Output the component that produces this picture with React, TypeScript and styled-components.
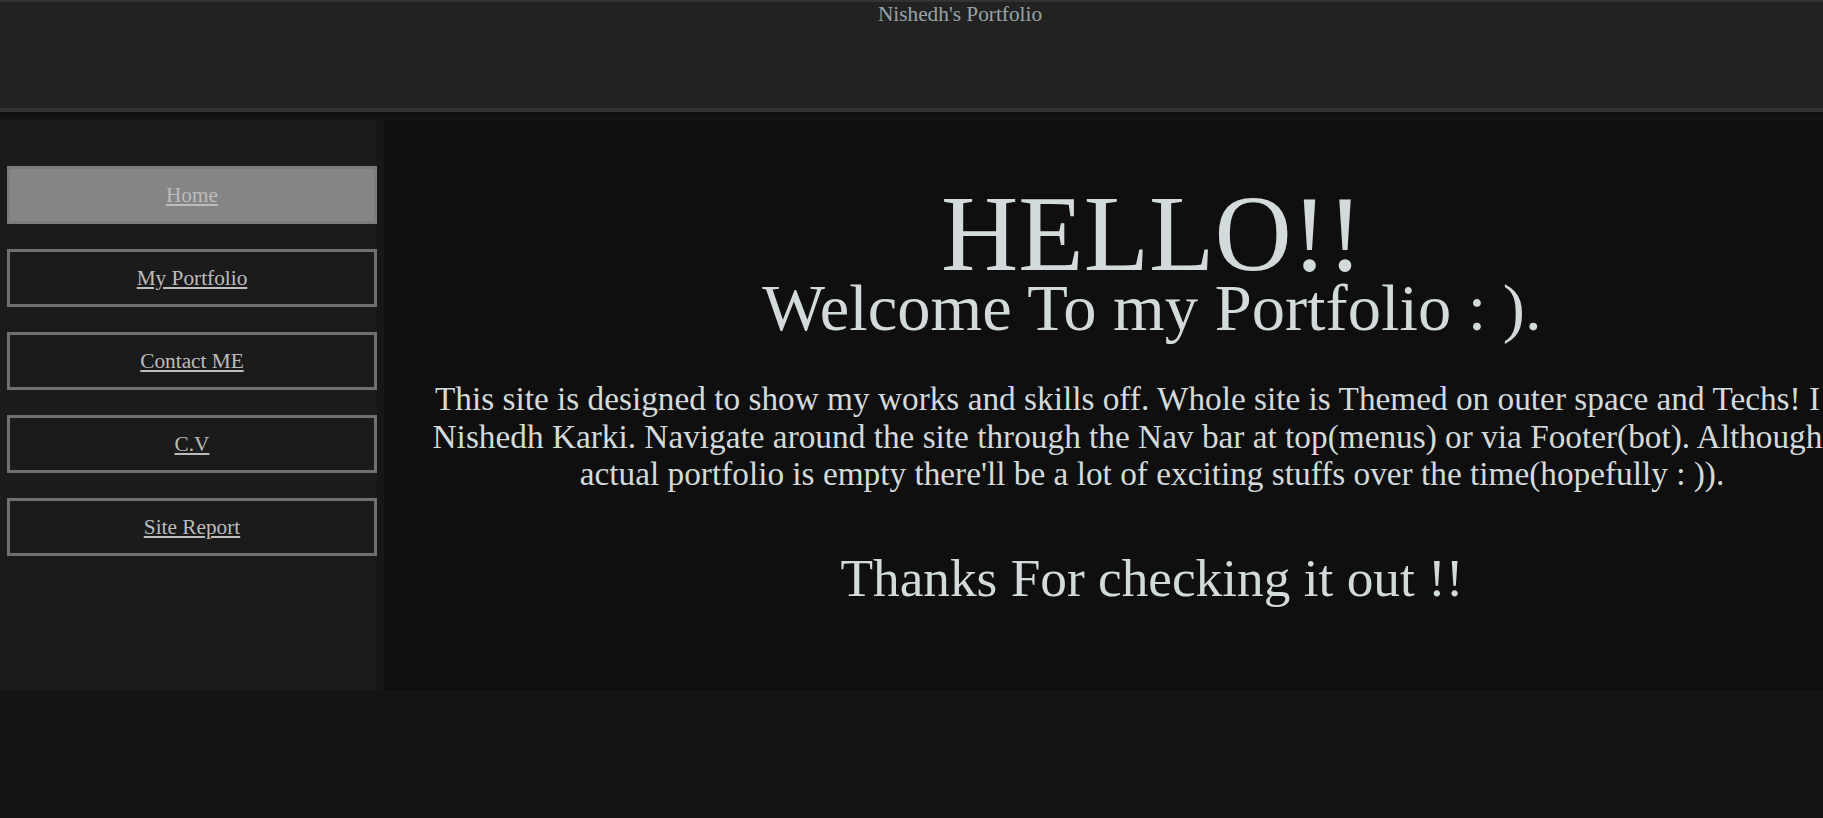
import React from "react";
import styled, { createGlobalStyle } from "styled-components";

const GlobalStyle = createGlobalStyle`
  html,
  body {
    margin: 0;
    padding: 0;
    background-color: #141414;
    overflow: hidden;
  }

  body {
    font-family: "Liberation Serif", "Times New Roman", serif;
  }
`;

const navItems = ["Home", "My Portfolio", "Contact ME", "C.V", "Site Report"];

const App = () => {
  return (
    <>
      <GlobalStyle />
      <Page>
        <Header>
          <SiteTitle>Nishedh's Portfolio</SiteTitle>
        </Header>
        <Body>
          <Sidebar>
            {navItems.map((item, i) => (
              <NavButton key={item} $active={i === 0}>
                <NavLink href="#">{item}</NavLink>
              </NavButton>
            ))}
          </Sidebar>
          <Main>
            <Hello>HELLO!!</Hello>
            <Welcome>Welcome To my Portfolio : ).</Welcome>
            <Intro>
              This site is designed to show my works and skills off. Whole site
              is Themed on outer space and Techs! I am Nishedh Karki. Navigate
              around the site through the Nav bar at top(menus) or via
              Footer(bot). Although the actual portfolio is empty there'll be a
              lot of exciting stuffs over the time(hopefully : )).
            </Intro>
            <Thanks>Thanks For checking it out !!</Thanks>
          </Main>
        </Body>
      </Page>
    </>
  );
};

export default App;

const Page = styled.div`
  width: 1920px;
`;

const Header = styled.header`
  height: 106px;
  background-color: #222222;
  border-top: 2px solid #333333;
  border-bottom: 4px solid #333333;
  box-shadow: 0 2px 3px #0e0e0e;
  text-align: center;
`;

const SiteTitle = styled.div`
  font-size: 21.3px;
  color: #98a2a6;
`;

const Body = styled.div`
  display: flex;
  height: 570px;
  margin-top: 8px;
`;

const Sidebar = styled.nav`
  flex: 0 0 20%;
  box-sizing: border-box;
  background-color: #1b1b1b;
  border-right: 7px solid #171717;
  padding: 46px 0 0 7px;
  display: flex;
  flex-direction: column;
  gap: 25px;
`;

const NavButton = styled.div<{ $active?: boolean }>`
  height: 58px;
  box-sizing: border-box;
  border: 3px solid ${(p) => (p.$active ? "#7b7b7b" : "#707070")};
  background-color: ${(p) => (p.$active ? "#858585" : "transparent")};
  display: flex;
  align-items: center;
  justify-content: center;
`;

const NavLink = styled.a`
  font-size: 21.3px;
  color: #bcbcbc;
  text-decoration: underline;
`;

const Main = styled.main`
  flex: 1;
  background-color: #0f0f0f;
  color: #d3dadb;
  text-align: center;
  padding-top: 69px;
`;

const Hello = styled.h1`
  margin: 0;
  font-size: 107px;
  font-weight: normal;
  line-height: 90px;
`;

const Welcome = styled.h2`
  margin: 1px 0 0;
  font-size: 66.5px;
  font-weight: normal;
  line-height: 56px;
`;

const Intro = styled.p`
  margin: 44px 0 0;
  padding: 0 20px;
  font-size: 33.3px;
  line-height: 37.5px;
`;

const Thanks = styled.h3`
  margin: 55px 0 0;
  font-size: 53.3px;
  font-weight: normal;
  line-height: 61px;
`;
